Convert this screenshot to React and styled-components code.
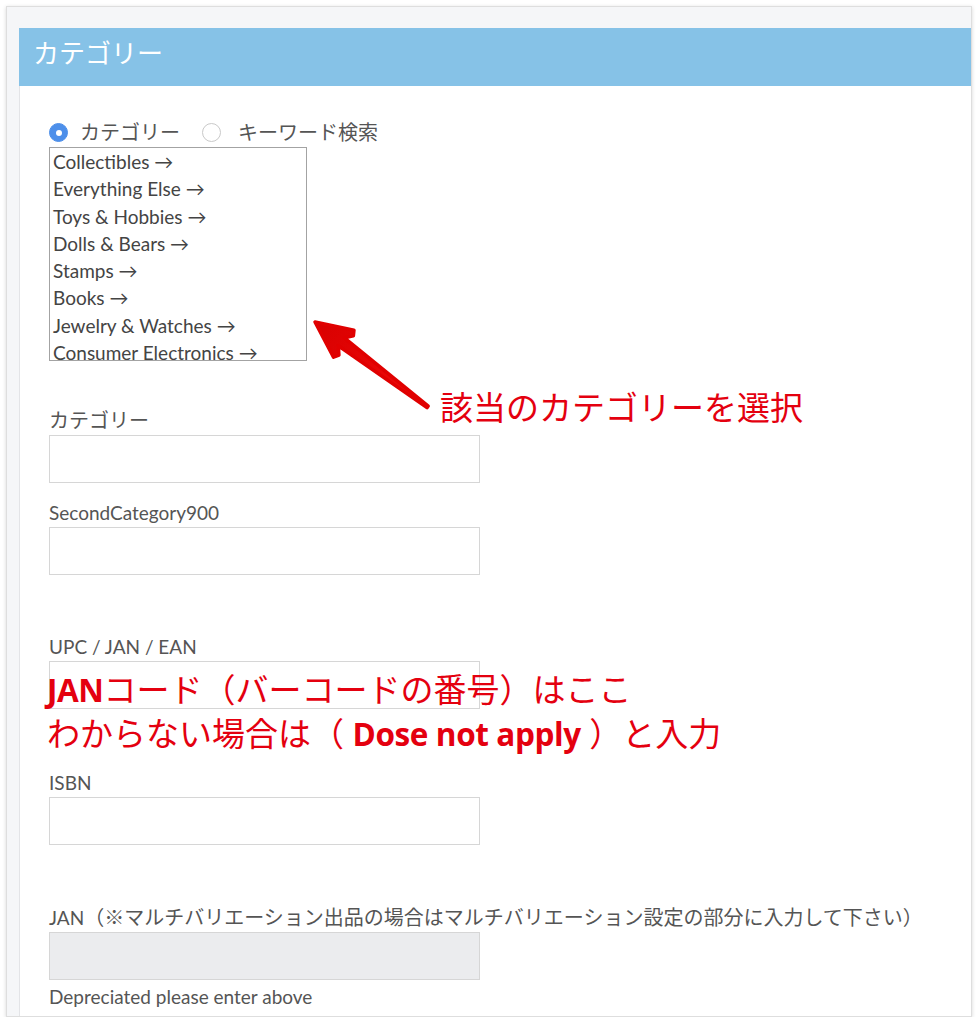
import React from "react";
import styled, { createGlobalStyle } from "styled-components";

const GlobalStyle = createGlobalStyle`
  body {
    margin: 0;
    background: #ffffff;
    font-family: Lato, "Noto Sans CJK JP", sans-serif;
  }
`;

const categorias = [
  "Collectibles",
  "Everything Else",
  "Toys & Hobbies",
  "Dolls & Bears",
  "Stamps",
  "Books",
  "Jewelry & Watches",
  "Consumer Electronics",
];

function Campo({ label, gap, disabled, children }) {
  return (
    <Field gap={gap}>
      <Label>{label}</Label>
      <InputWrap>
        <Input disabled={disabled} />
        {children}
      </InputWrap>
    </Field>
  );
}

function App() {
  return (
    <>
      <GlobalStyle />
      <Frame>
        <Header>カテゴリー</Header>
        <Panel>
          <CategoryBlock>
            <RadioRow>
              <Radio checked gap={12} />
              <RadioText gap={22}>カテゴリー</RadioText>
              <Radio gap={17} />
              <RadioText>キーワード検索</RadioText>
            </RadioRow>
            <ListBox>
              {categorias.map((c) => (
                <Item key={c}>{c} →</Item>
              ))}
            </ListBox>

            <Arrow viewBox="300 310 140 110">
              <defs>
                <linearGradient id="seta" x1="0" y1="0" x2="1" y2="0">
                  <stop offset="0" stopColor="#d80000" />
                  <stop offset="1" stopColor="#f20a0a" />
                </linearGradient>
              </defs>
              <g transform="translate(315 322) rotate(37)">
                <polygon
                  points="0,0 36,-17 39,-12 33,-5 141,-1 141,1 33,5 39,12 36,17"
                  fill="url(#seta)"
                  stroke="#e00000"
                  strokeWidth="3.5"
                  strokeLinejoin="round"
                />
              </g>
            </Arrow>
            <Hint>該当のカテゴリーを選択</Hint>
          </CategoryBlock>

          <Campo label={<Jp>カテゴリー</Jp>} gap={48} />
          <Campo label="SecondCategory900" gap={18} />
          <Campo label="UPC / JAN / EAN" gap={60}>
            <Note>
              <b>JAN</b>コード（バーコードの番号）はここ
              <br />
              わからない場合は（ <b>Dose not apply</b> ）と入力
            </Note>
          </Campo>
          <Campo label="ISBN" gap={62} />
          <Campo
            label={
              <>
                JAN
                <Jp>
                  （※マルチバリエーション出品の場合はマルチバリエーション設定の部分に入力して下さい）
                </Jp>
              </>
            }
            gap={61}
            disabled
          />
          <Aviso>Depreciated please enter above</Aviso>
        </Panel>
      </Frame>
    </>
  );
}

const Frame = styled.div`
  margin: 6px 6px 0;
  border: 1px solid #dedede;
  box-shadow: 0 1px 4px rgba(0, 0, 0, 0.16);
  background: #f5f6f8;
  padding: 21px 0 0 12px;
`;

const Header = styled.div`
  height: 58px;
  box-sizing: border-box;
  padding: 0 0 10px 14px;
  background: #86c2e7;
  color: #ffffff;
  font-size: 26px;
  line-height: 48px;
  font-family: "Noto Sans CJK JP", sans-serif;
  font-weight: 400;
`;

const Panel = styled.div`
  background: #ffffff;
  border-left: 1px solid #e3e4e7;
  padding: 34px 0 7px 29px;
  color: #555555;
`;

const CategoryBlock = styled.div`
  position: relative;
`;

const RadioRow = styled.div`
  display: flex;
  align-items: center;
  height: 25px;
`;

const Radio = styled.span`
  width: 19px;
  height: 19px;
  box-sizing: border-box;
  border-radius: 50%;
  margin-right: ${(props) => props.gap}px;
  background: ${(props) => (props.checked ? "#4d8fea" : "#ffffff")};
  border: 1px solid ${(props) => (props.checked ? "#4d8fea" : "#c9c9c9")};
  display: flex;
  align-items: center;
  justify-content: center;
  &::after {
    content: "";
    width: 6px;
    height: 6px;
    border-radius: 50%;
    background: #ffffff;
    display: ${(props) => (props.checked ? "block" : "none")};
  }
`;

const RadioText = styled.span`
  font-size: 20px;
  line-height: 25px;
  color: #555555;
  margin-right: ${(props) => props.gap || 0}px;
`;

const ListBox = styled.div`
  margin-top: 2px;
  width: 258px;
  height: 214px;
  box-sizing: border-box;
  border: 1px solid #a3a3a3;
  padding-left: 3px;
`;

const Item = styled.div`
  font-size: 19px;
  line-height: 27.3px;
  color: #444444;
  white-space: nowrap;
`;

const Arrow = styled.svg`
  position: absolute;
  left: 251px;
  top: 190px;
  width: 140px;
  height: 110px;
  pointer-events: none;
`;

const Hint = styled.div`
  position: absolute;
  left: 391px;
  top: 266px;
  font-family: "Noto Sans CJK JP", sans-serif;
  font-size: 33px;
  line-height: 40px;
  color: #e4000f;
  white-space: nowrap;
`;

const Field = styled.div`
  margin-top: ${(props) => props.gap}px;
`;

const Label = styled.div`
  height: 24px;
  font-size: 19px;
  line-height: 24px;
  margin-bottom: 2px;
  color: #555555;
  white-space: nowrap;
`;

const Jp = styled.span`
  font-size: 20px;
  line-height: 0;
`;

const InputWrap = styled.div`
  position: relative;
`;

const Input = styled.input`
  display: block;
  width: 431px;
  height: 48px;
  box-sizing: border-box;
  margin: 0;
  border: 1px solid #d6d6d6;
  background: ${(props) => (props.disabled ? "#ebecee" : "#ffffff")};
`;

const Note = styled.div`
  position: absolute;
  left: -2px;
  top: 7px;
  font-family: "Open Sans", "Noto Sans CJK JP", sans-serif;
  font-size: 33px;
  line-height: 44px;
  color: #e4000f;
  white-space: nowrap;
  b {
    font-weight: 700;
    font-size: 31.5px;
    letter-spacing: -0.4px;
  }
`;

const Aviso = styled.div`
  margin-top: 5px;
  font-size: 19px;
  line-height: 24px;
  color: #555555;
`;

export default App;
